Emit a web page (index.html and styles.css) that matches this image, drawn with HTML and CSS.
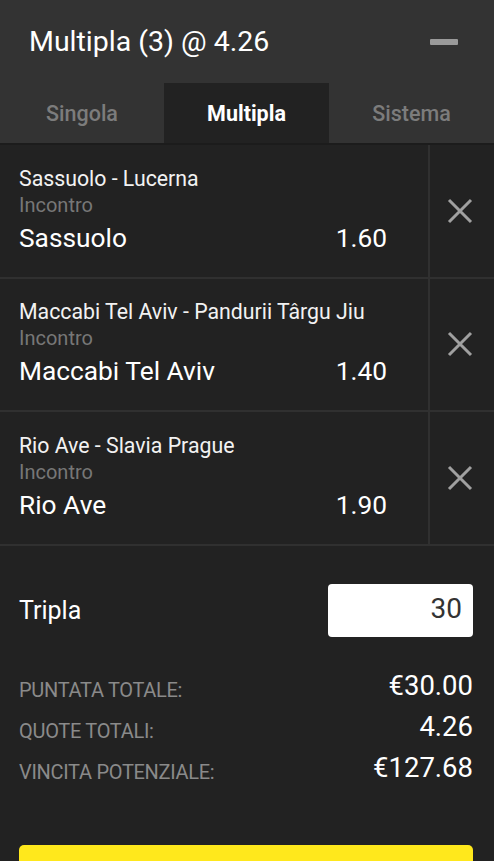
FILE: index.html
```html
<!DOCTYPE html>
<html lang="it">
<head>
<meta charset="utf-8">
<link rel="stylesheet" href="styles.css">
</head>
<body>
<div class="slip">
  <header class="head">
    <h1 class="title">Multipla (3) @ 4.26</h1>
    <span class="minus"></span>
  </header>
  <nav class="tabs">
    <div class="tab">Singola</div>
    <div class="tab active">Multipla</div>
    <div class="tab">Sistema</div>
  </nav>
  <div class="bets">
    <div class="bet">
      <div class="info">
        <div class="match">Sassuolo - Lucerna</div>
        <div class="market">Incontro</div>
        <div class="pick"><span>Sassuolo</span><span class="odd">1.60</span></div>
      </div>
      <div class="remove"><svg width="26" height="26" viewBox="0 0 26 26"><path d="M2 2L24 24M24 2L2 24" stroke="#a0a0a0" stroke-width="3"/></svg></div>
    </div>
    <div class="bet">
      <div class="info">
        <div class="match">Maccabi Tel Aviv - Pandurii Târgu Jiu</div>
        <div class="market">Incontro</div>
        <div class="pick"><span>Maccabi Tel Aviv</span><span class="odd">1.40</span></div>
      </div>
      <div class="remove"><svg width="26" height="26" viewBox="0 0 26 26"><path d="M2 2L24 24M24 2L2 24" stroke="#a0a0a0" stroke-width="3"/></svg></div>
    </div>
    <div class="bet">
      <div class="info">
        <div class="match">Rio Ave - Slavia Prague</div>
        <div class="market">Incontro</div>
        <div class="pick"><span>Rio Ave</span><span class="odd">1.90</span></div>
      </div>
      <div class="remove"><svg width="26" height="26" viewBox="0 0 26 26"><path d="M2 2L24 24M24 2L2 24" stroke="#a0a0a0" stroke-width="3"/></svg></div>
    </div>
  </div>
  <section class="stake">
    <div class="stake-row">
      <span class="stake-label">Tripla</span>
      <div class="stake-input">30</div>
    </div>
    <div class="sum">
      <div class="sum-row"><span class="sum-label">PUNTATA TOTALE:</span><span class="sum-val">€30.00</span></div>
      <div class="sum-row"><span class="sum-label">QUOTE TOTALI:</span><span class="sum-val">4.26</span></div>
      <div class="sum-row"><span class="sum-label">VINCITA POTENZIALE:</span><span class="sum-val">€127.68</span></div>
    </div>
    <div class="place"></div>
  </section>
</div>
</body>
</html>
```
FILE: styles.css
```css
* { box-sizing: border-box; }
html, body { margin: 0; padding: 0; background: #222222; }
body { font-family: Roboto, "Noto Sans", sans-serif; color: #fff; width: 494px; height: 861px; overflow: hidden; }
.slip { display: flex; flex-direction: column; }
.head { height: 83px; background: #333333; display: flex; align-items: center; justify-content: space-between; padding: 0 36px 0 29px; }
.title { margin: 0; font-size: 28.5px; font-weight: 400; color: #fff; padding-bottom: 1px; }
.minus { width: 28px; height: 6px; background: #9a9a9a; border-radius: 1px; }
.tabs { display: grid; grid-template-columns: 164px 165px 1fr; height: 60px; background: #333333; }
.tab { display: flex; align-items: center; justify-content: center; font-size: 21.5px; font-weight: 500; color: #7c7c7c; padding-top: 1px; }
.tab.active { background: #222222; color: #fff; font-weight: 700; }
.bets { border-top: 2px solid #1c1c1c; }
.bet { height: 133.5px; display: flex; border-bottom: 2px solid #303030; }
.info { flex: 1; display: flex; flex-direction: column; justify-content: center; padding: 2px 41px 0 19px; border-right: 2px solid #303030; }
.match { font-size: 21.3px; line-height: 26px; color: #f2f2f2; white-space: nowrap; }
.market { font-size: 20px; line-height: 26px; color: #777; }
.pick { display: flex; justify-content: space-between; font-size: 26.3px; line-height: 40px; color: #fff; }
.remove { width: 64px; display: flex; align-items: center; justify-content: center; padding-right: 5px; }
.stake { padding: 38px 21px 0 19px; }
.stake-row { display: flex; align-items: center; justify-content: space-between; height: 53px; }
.stake-label { font-size: 25px; color: #fff; }
.stake-input { width: 145px; height: 53px; background: #fff; border-radius: 4px; color: #333; font-size: 28px; text-align: right; padding: 8px 11px 0 0; }
.sum { margin-top: 33px; display: flex; flex-direction: column; }
.sum-row { display: flex; justify-content: space-between; align-items: center; height: 41px; }
.sum-label { font-size: 20px; color: #8a8a8a; letter-spacing: -0.3px; }
.sum-val { font-size: 27.5px; color: #fff; padding-bottom: 10px; }
.place { margin-top: 52px; height: 40px; background: #ffe81c; border-radius: 5px; }
```
